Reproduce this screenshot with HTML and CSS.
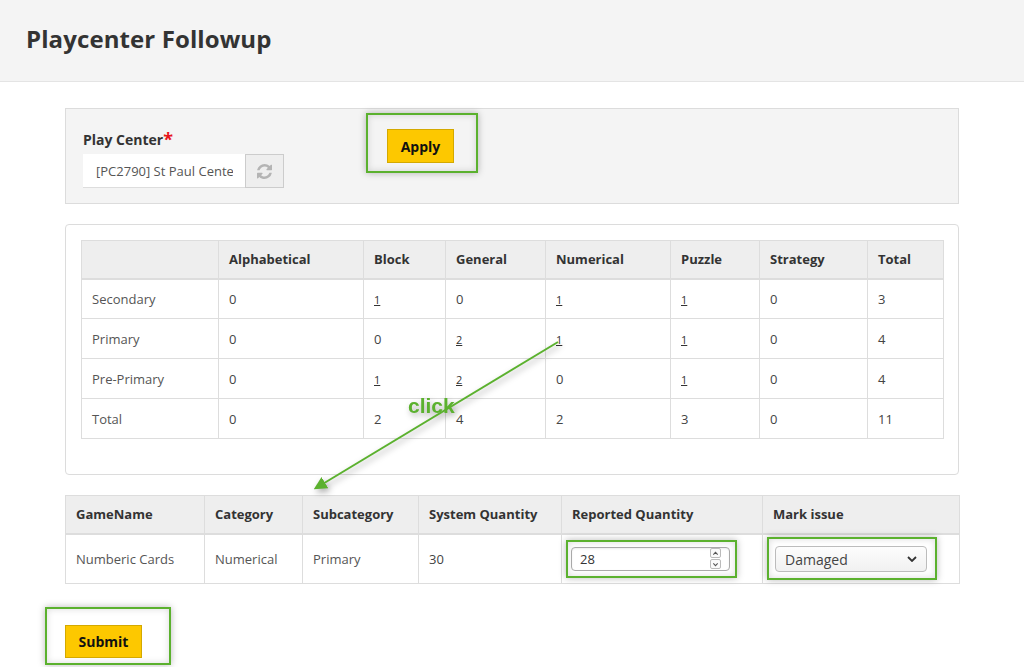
FILE: index.html
```html
<!DOCTYPE html>
<html lang="en">
<head>
<meta charset="utf-8">
<title>Playcenter Followup</title>
<link rel="stylesheet" href="styles.css">
</head>
<body>
<header class="topbar">
  <h1 class="title">Playcenter Followup</h1>
</header>
<main class="page">
  <section class="panel filter">
    <div class="field">
      <label class="field-label">Play Center<span class="req">*</span></label>
      <div class="input-group">
        <input class="text-input" type="text" value="[PC2790] St Paul Center" readonly>
        <span class="addon">
          <svg class="refresh" viewBox="0 0 1536 1536" width="15" height="15"><path d="M1511 928q0 5-1 7-64 268-268 434.5T764 1536q-146 0-282.5-55T238 1324l-129 129q-19 19-45 19t-45-19-19-45V960q0-26 19-45t45-19h448q26 0 45 19t19 45-19 45l-137 137q71 66 161 102t187 36q134 0 250-65t186-179q11-17 53-117 8-23 30-23h192q13 0 22.5 9.5t9.5 22.5zm25-800v448q0 26-19 45t-45 19h-448q-26 0-45-19t-19-45 19-45l138-138Q969 256 768 256q-134 0-250 65T332 500q-11 17-53 117-8 23-30 23H50q-13 0-22.5-9.5T18 608v-7q65-268 270-434.5T768 0q146 0 284 55.5T1297 212l130-129q19-19 45-19t45 19 19 45z"/></svg>
        </span>
      </div>
    </div>
    <div class="highlight apply-hl"><button class="btn btn-apply" type="button">Apply</button></div>
  </section>

  <section class="panel summary">
    <table class="grid summary-table">
      <colgroup>
        <col style="width:137px"><col style="width:145px"><col style="width:82px"><col style="width:100px">
        <col style="width:125px"><col style="width:89px"><col style="width:108px"><col style="width:76px">
      </colgroup>
      <thead>
        <tr><th></th><th>Alphabetical</th><th>Block</th><th>General</th><th>Numerical</th><th>Puzzle</th><th>Strategy</th><th>Total</th></tr>
      </thead>
      <tbody>
        <tr><td class="rowname">Secondary</td><td>0</td><td><a href="#">1</a></td><td>0</td><td><a href="#">1</a></td><td><a href="#">1</a></td><td>0</td><td>3</td></tr>
        <tr><td class="rowname">Primary</td><td>0</td><td>0</td><td><a href="#">2</a></td><td><a href="#">1</a></td><td><a href="#">1</a></td><td>0</td><td>4</td></tr>
        <tr><td class="rowname">Pre-Primary</td><td>0</td><td><a href="#">1</a></td><td><a href="#">2</a></td><td>0</td><td><a href="#">1</a></td><td>0</td><td>4</td></tr>
        <tr><td class="rowname">Total</td><td>0</td><td>2</td><td>4</td><td>2</td><td>3</td><td>0</td><td>11</td></tr>
      </tbody>
    </table>
  </section>

  <table class="grid detail-table">
    <colgroup>
      <col style="width:139px"><col style="width:98px"><col style="width:116px"><col style="width:143px"><col style="width:201px"><col style="width:197px">
    </colgroup>
    <thead>
      <tr><th>GameName</th><th>Category</th><th>Subcategory</th><th>System Quantity</th><th>Reported Quantity</th><th>Mark issue</th></tr>
    </thead>
    <tbody>
      <tr>
        <td class="rowname">Numberic Cards</td>
        <td class="rowname">Numerical</td>
        <td class="rowname">Primary</td>
        <td>30</td>
        <td class="ctl-cell">
          <div class="highlight num-hl">
            <div class="num-box">
              <span class="num-value">28</span>
              <span class="spin">
                <span class="spin-btn"><svg viewBox="0 0 8 8" width="7" height="7"><path d="M1.5 5.2 L4 2.7 L6.5 5.2" fill="none" stroke="#555" stroke-width="1.2"/></svg></span>
                <span class="spin-btn"><svg viewBox="0 0 8 8" width="7" height="7"><path d="M1.5 2.8 L4 5.3 L6.5 2.8" fill="none" stroke="#555" stroke-width="1.2"/></svg></span>
              </span>
            </div>
          </div>
        </td>
        <td class="ctl-cell">
          <div class="highlight sel-hl">
            <div class="select-box">
              <span class="select-value">Damaged</span>
              <svg class="chev" viewBox="0 0 10 6" width="10" height="6"><path d="M1 1 L5 5 L9 1" fill="none" stroke="#333" stroke-width="1.8"/></svg>
            </div>
          </div>
        </td>
      </tr>
    </tbody>
  </table>

  <div class="highlight submit-hl"><button class="btn btn-submit" type="button">Submit</button></div>
</main>

<svg class="annotation" width="1024" height="667" viewBox="0 0 1024 667">
  <defs>
    <marker id="head" viewBox="0 0 10 10" refX="8" refY="5" markerWidth="6.5" markerHeight="6.5" orient="auto">
      <path d="M0 0 L10 5 L0 10 Z" fill="#5bb12e"/>
    </marker>
  </defs>
  <line x1="558" y1="342" x2="316" y2="488" stroke="#5bb12e" stroke-width="2" marker-end="url(#head)"/>
  <text x="408" y="413" class="click-text">click</text>
</svg>
</body>
</html>
```
FILE: styles.css
```css
* { box-sizing: border-box; }

html, body {
  margin: 0;
  padding: 0;
  background: #fff;
}

body {
  font-family: "Open Sans", "Liberation Sans", sans-serif;
  font-size: 13px;
  color: #333;
  width: 1024px;
  height: 667px;
  overflow: hidden;
}

.topbar {
  height: 82px;
  background: #f4f4f4;
  border-bottom: 1px solid #e4e4e4;
  display: flex;
  align-items: center;
  padding-left: 26px;
  padding-bottom: 5px;
}

.title {
  margin: 0;
  font-size: 24px;
  font-weight: 700;
  color: #333;
  letter-spacing: 0.1px;
}

.page {
  width: 894px;
  margin: 26px auto 0;
}

.panel {
  border: 1px solid #dcdcdc;
}

.filter {
  background: #f4f4f4;
  display: flex;
  align-items: flex-start;
  padding: 0 17px 15px;
}

.field {
  margin-top: 19px;
}

.field-label {
  display: block;
  height: 20px;
  line-height: 20px;
  font-size: 14px;
  font-weight: 700;
  color: #333;
  margin-bottom: 6px;
}

.req {
  color: #e8141b;
  font-size: 18px;
  position: relative;
  top: 1px;
}

.input-group {
  display: flex;
  height: 34px;
}

.text-input {
  width: 162px;
  height: 34px;
  border: none;
  border-bottom: 1px solid #ddd;
  background: #fff;
  padding: 0 12px 0 13px;
  font-family: inherit;
  font-size: 13px;
  color: #555;
  outline: none;
}

.addon {
  width: 39px;
  height: 34px;
  background: #eee;
  border: 1px solid #ccc;
  display: flex;
  align-items: center;
  justify-content: center;
}

.refresh path { fill: #b4b4b4; }

.highlight {
  border: 2px solid #5bb12e;
  box-shadow: 0 0 7px rgba(0, 0, 0, 0.28), inset 0 0 7px rgba(0, 0, 0, 0.14);
}

.apply-hl {
  margin-top: 4px;
  margin-left: 82px;
  padding: 14px 22px 8px 19px;
}

.btn {
  display: block;
  background: #fdc800;
  border: 1px solid #d4a900;
  font-family: inherit;
  font-weight: 700;
  color: #111;
  padding: 0;
  cursor: pointer;
}

.btn-apply {
  width: 67px;
  height: 34px;
  font-size: 14px;
}

.summary {
  margin-top: 20px;
  background: #fff;
  border-radius: 4px;
  padding: 15px 15px 35px;
}

.grid {
  border-collapse: collapse;
  table-layout: fixed;
}

.grid th, .grid td {
  border: 1px solid #ddd;
  text-align: left;
  padding: 0 10px;
  vertical-align: middle;
}

.grid th {
  background: #eee;
  font-weight: 700;
  color: #333;
  font-size: 13px;
  border-bottom: 2px solid #ddd;
}

.grid td {
  color: #444;
  font-size: 13px;
}

.grid td.rowname {
  color: #555;
}

.grid a {
  color: #333;
  text-decoration: underline;
  font-size: 11px;
}

.summary-table {
  width: 862px;
}

.summary-table thead tr { height: 38px; }
.summary-table tbody tr { height: 40px; }

.detail-table {
  width: 894px;
  margin-top: 20px;
}

.detail-table thead tr { height: 38px; }
.detail-table tbody tr { height: 50px; }

.detail-table td.ctl-cell {
  padding: 0 4px;
}

.num-hl {
  display: inline-block;
  width: 171px;
  padding: 5px 5px 5px 3px;
}

.num-box {
  display: flex;
  align-items: center;
  height: 24px;
  border: 1px solid #a9a9a9;
  border-radius: 4px;
  padding-left: 8px;
  background: #fff;
  box-shadow: inset 0 1px 2px rgba(0, 0, 0, 0.08);
}

.num-value {
  flex: 1;
  color: #333;
  font-size: 13px;
}

.spin {
  display: flex;
  flex-direction: column;
  gap: 1px;
  margin-right: 8px;
}

.spin-btn {
  width: 11px;
  height: 10px;
  border: 1px solid #bbb;
  border-radius: 2px;
  display: flex;
  align-items: center;
  justify-content: center;
  background: #fafafa;
}

.sel-hl {
  display: inline-block;
  width: 170px;
  padding: 7px 8px 6px 6px;
}

.select-box {
  display: flex;
  align-items: center;
  justify-content: space-between;
  height: 26px;
  border: 1px solid #bcbcbc;
  border-radius: 4px;
  background: linear-gradient(#fdfdfd, #f1f1f1);
  padding: 0 9px 0 9px;
}

.select-value {
  font-size: 14px;
  color: #444;
}

.submit-hl {
  margin-top: 23px;
  margin-left: -20px;
  width: 126px;
  padding: 16px 27px 5px 18px;
}

.btn-submit {
  width: 77px;
  height: 33px;
  font-size: 14px;
}

.annotation {
  position: absolute;
  left: 0;
  top: 0;
  pointer-events: none;
  filter: drop-shadow(2px 3px 3px rgba(0, 0, 0, 0.35));
}

.click-text {
  font-family: "Liberation Sans", Arial, sans-serif;
  font-weight: 700;
  font-size: 21px;
  fill: #5bb12e;
}
```
